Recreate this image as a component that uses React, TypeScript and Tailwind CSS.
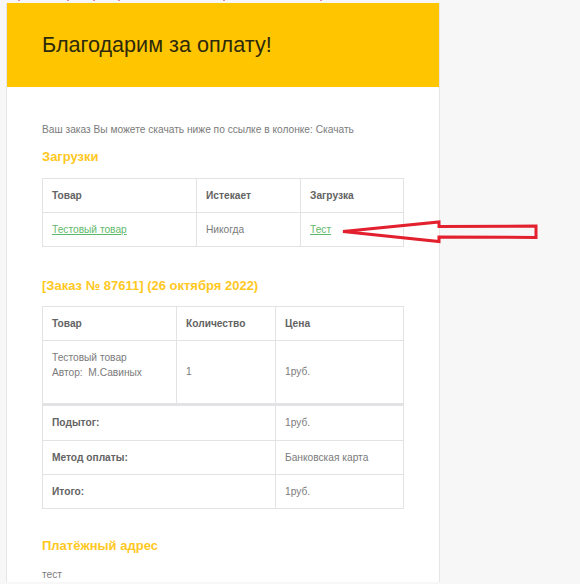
const sans = "font-['Liberation_Sans',Arial,sans-serif]";
const cell = "border border-[#e3e2e4] px-[9px] text-[10.2px] text-[#7b7b7b] align-middle";
const headCell = "border border-[#e3e2e4] px-[9px] text-[10.2px] font-bold text-[#636363] text-left align-middle";
const marks = [18, 67, 93, 118, 223, 320];

export default function App() {
  return (
    <div className={`relative h-[584px] w-[580px] overflow-hidden bg-[#f7f7f7] ${sans}`}>
      <div className="flex h-[3px] items-start">
        {marks.map((x, i) => (
          <span key={i} className="absolute top-0 h-[1px] w-[2px] bg-[#e58aa8]" style={{ left: x }} />
        ))}
      </div>
      <div className="ml-[6px] w-[434px] border-x border-[#e6e6e6] bg-white">
        <div className="flex h-[84px] items-center bg-[#ffc600] pl-[35px]">
          <h1 className="text-[21.6px] font-normal leading-none text-[#2d2a0c]">Благодарим за оплату!</h1>
        </div>
        <div className="px-[35px] pt-[36px]">
          <p className="text-[10.2px] leading-[14px] text-[#7b7b7b]">Ваш заказ Вы можете скачать ниже по ссылке в колонке: Скачать</p>
          <h2 className="mt-[12px] text-[13px] font-bold leading-[16px] text-[#ffc81f]">Загрузки</h2>
          <table className="mt-[13px] w-[361px] table-fixed border-collapse">
            <colgroup>
              <col className="w-[154px]" />
              <col className="w-[104px]" />
              <col className="w-[103px]" />
            </colgroup>
            <thead>
              <tr className="h-[34px]">
                <th className={headCell}>Товар</th>
                <th className={headCell}>Истекает</th>
                <th className={headCell}>Загрузка</th>
              </tr>
            </thead>
            <tbody>
              <tr className="h-[34px]">
                <td className={cell}><a className="text-[#5fb96a] underline">Тестовый товар</a></td>
                <td className={cell}>Никогда</td>
                <td className={cell}><a className="text-[#5fb96a] underline">Тест</a></td>
              </tr>
            </tbody>
          </table>
          <h2 className="mt-[31px] text-[13px] font-bold leading-[16px] text-[#ffc81f]">[Заказ № 87611] (26 октября 2022)</h2>
          <table className="mt-[12px] w-[361px] table-fixed border-collapse">
            <colgroup>
              <col className="w-[134px]" />
              <col className="w-[99px]" />
              <col className="w-[128px]" />
            </colgroup>
            <thead>
              <tr className="h-[34px]">
                <th className={headCell}>Товар</th>
                <th className={headCell}>Количество</th>
                <th className={headCell}>Цена</th>
              </tr>
            </thead>
            <tbody>
              <tr className="h-[64px]">
                <td className={cell}>
                  <div className="leading-[15px]">Тестовый товар</div>
                  <div className="leading-[15px]">Автор:&nbsp; М.Савиных</div>
                  <div className="h-[15px]" />
                </td>
                <td className={cell}>1</td>
                <td className={cell}>1руб.</td>
              </tr>
              <tr className="h-[36px]">
                <th colSpan={2} className={`${headCell} border-t-[3px]`}>Подытог:</th>
                <td className={`${cell} border-t-[3px]`}>1руб.</td>
              </tr>
              <tr className="h-[34px]">
                <th colSpan={2} className={headCell}>Метод оплаты:</th>
                <td className={cell}>Банковская карта</td>
              </tr>
              <tr className="h-[34px]">
                <th colSpan={2} className={headCell}>Итого:</th>
                <td className={cell}>1руб.</td>
              </tr>
            </tbody>
          </table>
          <h2 className="mt-[29px] text-[13px] font-bold leading-[16px] text-[#ffc81f]">Платёжный адрес</h2>
          <p className="mt-[14px] text-[10.2px] leading-[14px] text-[#7b7b7b]">тест</p>
        </div>
      </div>
      <svg className="absolute left-0 top-0" width="580" height="584" viewBox="0 0 580 584" fill="none">
        <path
          d="M343 231.5 L439 222 L439 226.5 L536 226 L536 237.5 L439 237 L439 241.5 Z"
          stroke="#e2202e"
          strokeWidth="3"
          strokeLinejoin="miter"
        />
      </svg>
    </div>
  );
}
